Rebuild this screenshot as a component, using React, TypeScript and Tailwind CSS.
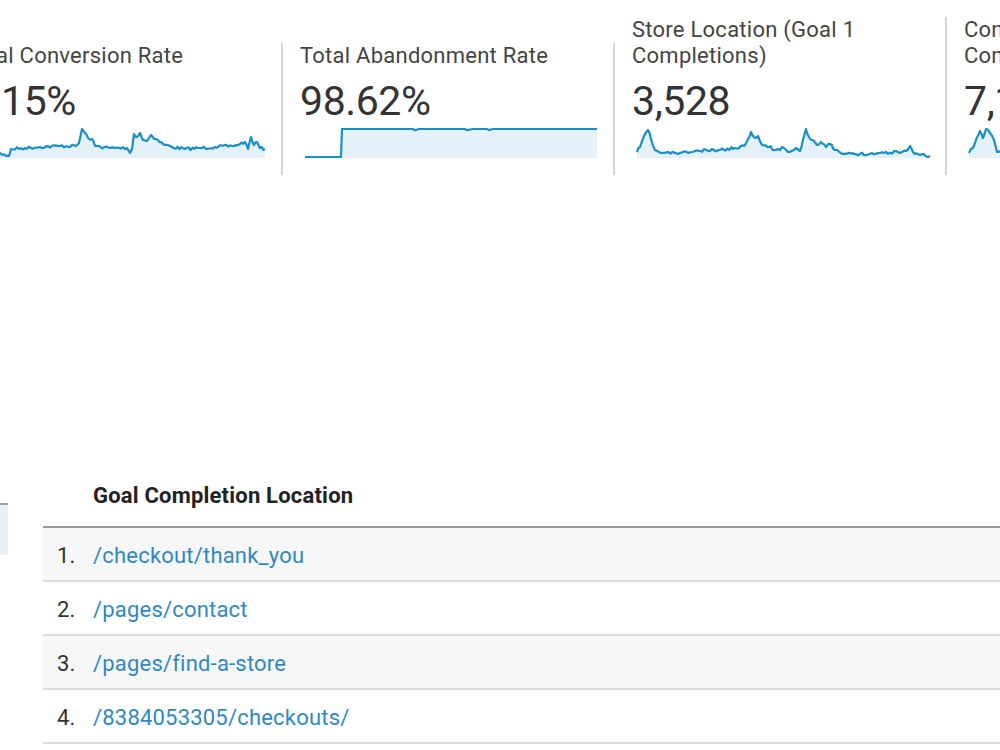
import React from "react";

type Pt = [number, number];

function rng(seed: number) {
  let s = seed;
  return () => {
    s = (s * 16807) % 2147483647;
    return (s - 1) / 2147483646;
  };
}

function buildPath(kp: Pt[], x0: number, top: number, seed: number, noise: number) {
  const r = rng(seed);
  const pts: Pt[] = [];
  for (let i = 0; i < kp.length - 1; i++) {
    const [ax, ay] = kp[i];
    const [bx, by] = kp[i + 1];
    const steps = Math.max(1, Math.round((bx - ax) / 2));
    for (let j = 0; j < steps; j++) {
      const t = j / steps;
      const x = ax + (bx - ax) * t;
      let y = ay + (by - ay) * t;
      if (j > 0) y += (r() - 0.5) * noise;
      pts.push([x - x0, y - top]);
    }
  }
  const last = kp[kp.length - 1];
  pts.push([last[0] - x0, last[1] - top]);
  return pts;
}

function Spark({ kp, x0, seed, noise = 3, width = 293 }: { kp: Pt[]; x0: number; seed: number; noise?: number; width?: number }) {
  const top = 126;
  const h = 33;
  const pts = buildPath(kp, x0, top, seed, noise);
  const line = pts.map((p, i) => `${i === 0 ? "M" : "L"}${p[0].toFixed(1)},${p[1].toFixed(1)}`).join(" ");
  const bottom = 32;
  const area = `${line} L${pts[pts.length - 1][0].toFixed(1)},${bottom} L${pts[0][0].toFixed(1)},${bottom} Z`;
  return (
    <svg width={width} height={h} viewBox={`0 0 ${width} ${h}`} className="block overflow-visible">
      <path d={area} fill="#e5f1f9" />
      <path d={line} fill="none" stroke="#1590cc" strokeWidth={2.2} strokeLinejoin="round" />
    </svg>
  );
}

const card1: Pt[] = [
  [-27, 150], [-10, 151], [0, 153], [6, 156], [9, 156], [11, 149], [25, 148], [40, 147], [60, 146], [76, 146], [79, 143], [82, 129], [85, 133], [88, 138], [92, 139], [95, 146], [110, 148], [127, 148], [130, 153], [132, 149], [134, 134], [137, 137], [140, 133], [143, 140], [147, 141], [151, 135], [156, 139], [163, 144], [172, 147], [185, 149], [200, 148], [215, 147], [232, 146], [240, 144], [245, 142], [248, 149], [251, 137], [254, 145], [257, 142], [260, 148], [265, 149],
];

const card3: Pt[] = [
  [637, 152], [640, 147], [644, 136], [648, 130], [651, 139], [655, 150], [661, 153], [680, 153], [700, 151], [720, 150], [735, 148], [744, 146], [748, 139], [751, 132], [754, 137], [758, 136], [762, 145], [769, 147], [776, 150], [784, 148], [790, 152], [796, 148], [800, 151], [803, 140], [806, 129], [809, 137], [813, 140], [817, 145], [821, 142], [826, 147], [830, 144], [835, 150], [843, 154], [860, 154], [880, 153], [898, 152], [906, 151], [910, 146], [913, 152], [920, 155], [930, 156],
];

const card4: Pt[] = [
  [970, 153], [974, 148], [978, 137], [981, 131], [984, 138], [987, 129], [991, 133], [995, 140], [998, 152], [1010, 150], [1040, 151],
];

function StepSpark() {
  const x0 = 305;
  const top = 126;
  const low = 157 - top;
  const high = 129 - top;
  const jx = 342 - x0;
  const end = 597 - x0;
  return (
    <svg width={293} height={33} viewBox="0 0 293 33" className="block">
      <path d={`M${jx},${high} L${end},${high} L${end},32 L${jx},32 Z`} fill="#e5f1f9" />
      <path
        d={`M0,${low} L${jx - 1},${low} L${jx},${high} L108,${high} L110,${high + 1.2} L114,${high} L160,${high} L162,${high + 1.2} L168,${high} L182,${high} L184,${high + 1} L188,${high} L${end},${high}`}
        fill="none"
        stroke="#1590cc"
        strokeWidth={2.2}
      />
    </svg>
  );
}

function Card({ label, value, chart }: { label: React.ReactNode; value: string; chart: React.ReactNode }) {
  return (
    <div className="w-[332px] shrink-0 border-r-2 border-[#d6d6d6] pl-[17px] pb-[16px]">
      <div className="text-[22px] leading-[26px] tracking-[0.25px] text-[#444]">{label}</div>
      <div className="mt-[10px] text-[41px] leading-[44px] tracking-[-0.4px] text-[#333]">{value}</div>
      <div className="mt-[3px] ml-[5px]">{chart}</div>
    </div>
  );
}

const rows = ["/checkout/thank_you", "/pages/contact", "/pages/find-a-store", "/8384053305/checkouts/"];

export default function App() {
  return (
    <div className="w-[1000px] h-[750px] overflow-hidden bg-white" style={{ fontFamily: "Roboto, Arial, sans-serif" }}>
      <div className="flex items-end ml-[-49px] pt-[17px]">
        <Card label="Goal Conversion Rate" value="0.15%" chart={<Spark kp={card1} x0={-27} seed={7} />} />
        <Card label="Total Abandonment Rate" value="98.62%" chart={<StepSpark />} />
        <Card label={<>Store Location (Goal 1<br />Completions)</>} value="3,528" chart={<Spark kp={card3} x0={637} seed={11} />} />
        <Card label={<>Contact (Goal 2<br />Completions)</>} value="7,184" chart={<Spark kp={card4} x0={970} seed={5} />} />
      </div>

      <div className="flex items-start mt-[302px]">
        <div className="w-[8px] shrink-0 mt-[26px]">
          <div className="h-[2px] bg-[#a0a0a0]" />
          <div className="h-[50px] bg-[#e6f1fa]" />
        </div>
        <div className="ml-[35px] flex-1 min-w-[1000px]">
          <div className="h-[51px] border-b-2 border-[#9a9a9a] pl-[50px] pt-[6px] text-[22px] leading-[26px] tracking-[0.2px] font-bold text-[#222]">
            Goal Completion Location
          </div>
          {rows.map((r, i) => (
            <div
              key={r}
              className={`flex items-center h-[54px] pt-[4px] border-b-2 border-[#dcdcdc] text-[22px] leading-[26px] tracking-[0.2px] ${i % 2 === 0 ? "bg-[#f7f7f7]" : "bg-white"}`}
            >
              <span className="w-[50px] pl-[14px] text-[#333]">{i + 1}.</span>
              <span className="text-[#2e88c8]">{r}</span>
            </div>
          ))}
        </div>
      </div>
    </div>
  );
}
